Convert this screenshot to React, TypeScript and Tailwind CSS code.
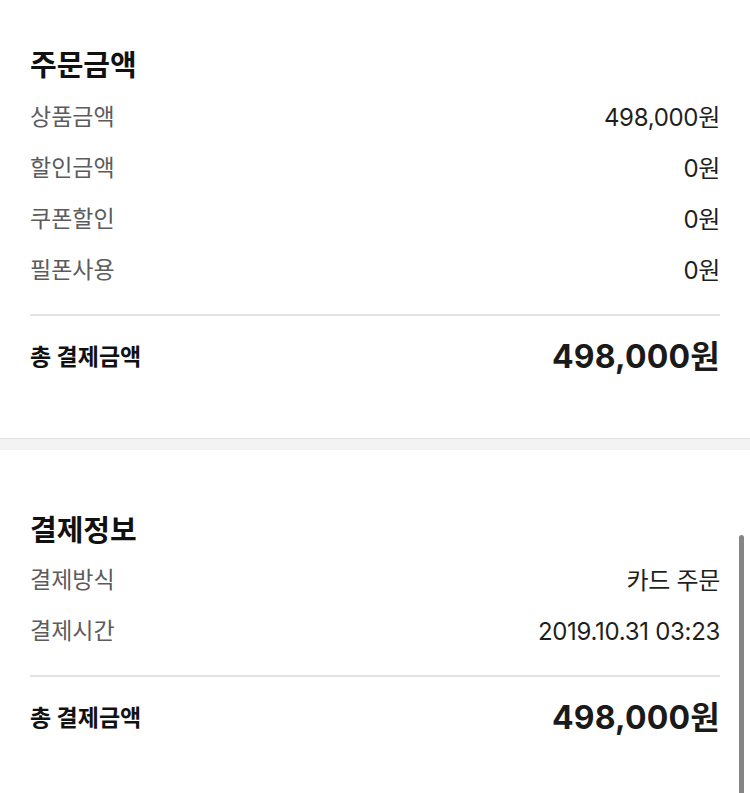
import React from "react";

const font = { fontFamily: '"Inter", "Noto Sans CJK KR", "Noto Sans", sans-serif' };

function Row({ label, value }: { label: string; value: string }) {
  return (
    <div className="flex h-[51px] items-center justify-between pt-[4px]">
      <span className="text-[23px] text-[#5c5c5c]">{label}</span>
      <span className="text-[24px] text-[#1f1f1f] tracking-[-0.3px]">{value}</span>
    </div>
  );
}

function Total() {
  return (
    <div className="flex h-[82px] items-center justify-between">
      <span className="text-[23px] font-bold text-[#111111]">총 결제금액</span>
      <span className="text-[32px] font-bold text-[#1a1a1a] tracking-[0.2px]">498,000원</span>
    </div>
  );
}

export default function App() {
  return (
    <div className="relative h-[793px] w-[750px] overflow-hidden bg-white" style={font}>
      <section className="px-[30px] pt-[42px] pb-[40px]">
        <h2 className="h-[40px] pt-[4px] text-[29px] font-bold leading-[40px] text-[#111111]">주문금액</h2>
        <div className="mt-[8px]">
          <Row label="상품금액" value="498,000원" />
          <Row label="할인금액" value="0원" />
          <Row label="쿠폰할인" value="0원" />
          <Row label="필폰사용" value="0원" />
        </div>
        <div className="mt-[20px] h-[2px] bg-[#e2e2e2]" />
        <Total />
      </section>
      <div className="h-[12px] border-t border-[#e0e0e0] bg-[#f3f3f3]" />
      <section className="px-[30px] pt-[57px] pb-[40px]">
        <h2 className="h-[40px] pt-[4px] text-[29px] font-bold leading-[40px] text-[#111111]">결제정보</h2>
        <div className="mt-[6px]">
          <Row label="결제방식" value="카드 주문" />
          <Row label="결제시간" value="2019.10.31 03:23" />
        </div>
        <div className="mt-[20px] h-[2px] bg-[#e2e2e2]" />
        <Total />
      </section>
      <div className="absolute right-[6px] top-[535px] h-[300px] w-[5px] rounded-full bg-[#858585]" />
    </div>
  );
}
